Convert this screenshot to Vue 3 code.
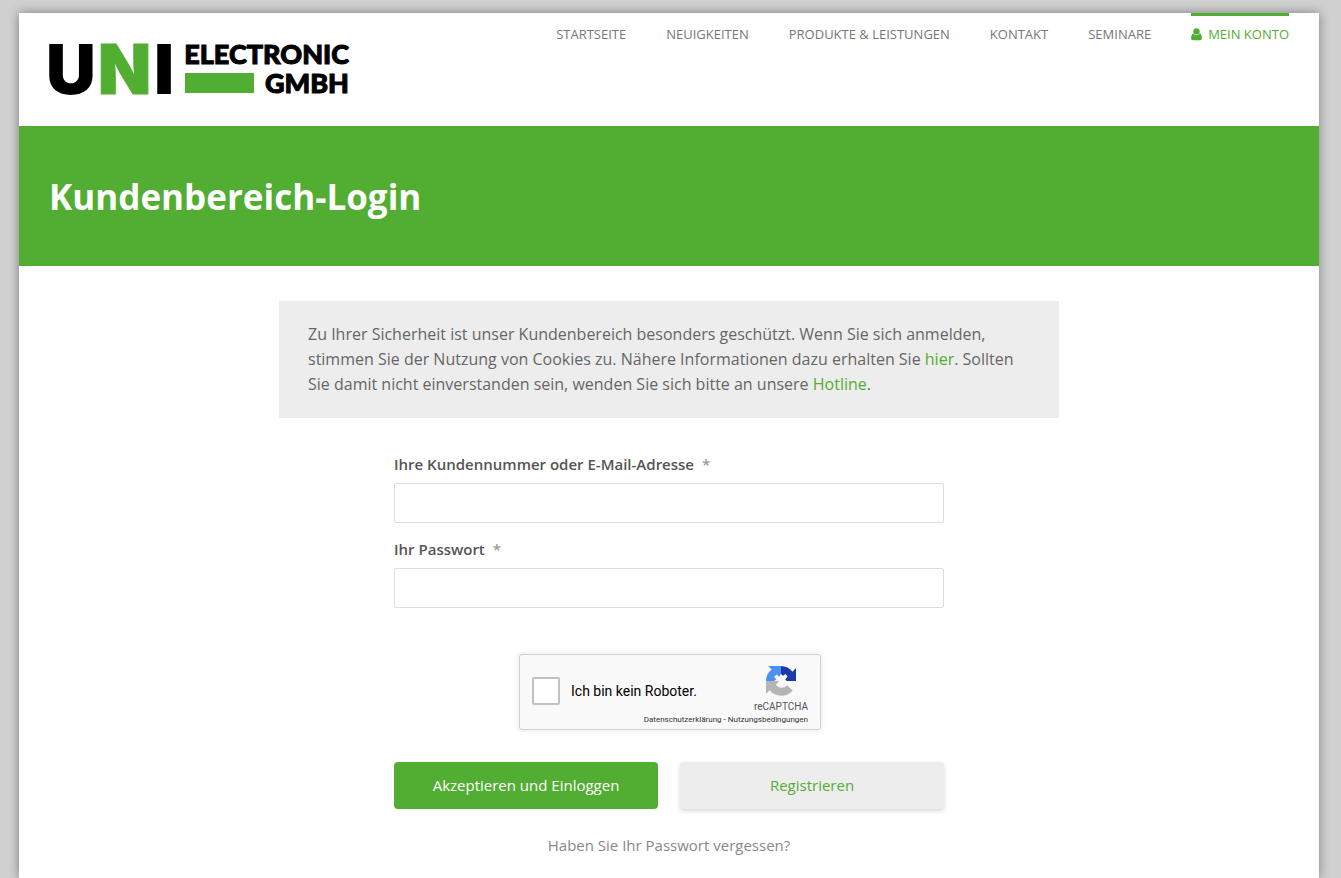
<script setup>
import { ref } from 'vue'

const links = ['Startseite', 'Neuigkeiten', 'Produkte & Leistungen', 'Kontakt', 'Seminare']
const user = ref('')
const password = ref('')
const human = ref(false)
</script>

<template>
  <div class="page">
    <header class="header">
      <a href="#" class="logo" aria-label="UNI Electronic GmbH">
        <svg width="302" height="54" viewBox="0 0 302 54">
          <g class="logo-big">
            <text x="-3" y="51">U</text>
            <text x="49" y="51" class="green outlined">N</text>
            <text x="105" y="51">I</text>
          </g>
          <g class="logo-small">
            <text x="300" y="21" text-anchor="end">ELECTRONIC</text>
            <text x="300" y="50" text-anchor="end">GMBH</text>
          </g>
          <rect x="136" y="30" width="69" height="20" class="green" />
        </svg>
      </a>
      <nav class="nav">
        <a v-for="link in links" :key="link" href="#" class="nav-link">{{ link }}</a>
        <a href="#" class="nav-link active">
          <svg width="11" height="13" viewBox="0 0 11 13" aria-hidden="true">
            <circle cx="5.5" cy="3.4" r="3.2" />
            <path d="M2.3 5.6C.7 6 .1 8 .1 10.3c0 1.300.8 2 2 2h6.800c1.200 0 2-.7 2-2C10.900 8 10.300 6 8.700 5.600 7.900 6.700 6.800 7.300 5.500 7.300S3.100 6.700 2.300 5.600z" />
          </svg>
          Mein Konto
        </a>
      </nav>
    </header>

    <section class="banner">
      <h1>Kundenbereich-Login</h1>
    </section>

    <main class="content">
      <p class="notice">
        Zu Ihrer Sicherheit ist unser Kundenbereich besonders geschützt. Wenn Sie sich anmelden,
        stimmen Sie der Nutzung von Cookies zu. Nähere Informationen dazu erhalten Sie
        <a href="#">hier</a>. Sollten Sie damit nicht einverstanden sein, wenden Sie sich bitte an
        unsere <a href="#">Hotline</a>.
      </p>

      <form class="form" @submit.prevent>
        <div class="field">
          <label for="user">Ihre Kundennummer oder E-Mail-Adresse <span class="star">*</span></label>
          <input id="user" v-model="user" type="text" autocomplete="username" />
        </div>
        <div class="field">
          <label for="password">Ihr Passwort <span class="star">*</span></label>
          <input id="password" v-model="password" type="password" autocomplete="current-password" />
        </div>

        <div class="captcha">
          <div class="captcha-check">
            <input id="human" v-model="human" type="checkbox" />
            <label for="human">Ich bin kein Roboter.</label>
          </div>
          <div class="captcha-brand">
            <svg width="30" height="30" viewBox="0 0 64 64" aria-hidden="true">
              <path fill="#1c3aa9" d="M64 32V4.500l-7.600 7.600A32 32 0 0 0 32 0v17l4 4 6-4 4 6-5 5 3 4z" />
              <path fill="#4a90f5" d="M32 0H4.500l7.600 7.600A32 32 0 0 0 0 32h17l5-4-5-5 6-5 5 5 4-6z" />
              <path fill="#b5b5b5" d="M0 32v27.500l7.600-7.600A32 32 0 0 0 57 52L45 41A15 15 0 0 1 21 40L28 32z" />
            </svg>
            <span>reCAPTCHA</span>
          </div>
          <div class="captcha-legal">
            <a href="#">Datenschutzerklärung</a> - <a href="#">Nutzungsbedingungen</a>
          </div>
        </div>

        <div class="actions">
          <button type="submit" class="btn primary">Akzeptieren und Einloggen</button>
          <button type="button" class="btn secondary">Registrieren</button>
        </div>
        <a href="#" class="forgot">Haben Sie Ihr Passwort vergessen?</a>
      </form>
    </main>
  </div>
</template>

<style>
body {
  background: #d0d0d0;
}
#app {
  display: flow-root;
}
</style>

<style scoped>
* {
  box-sizing: border-box;
}
a {
  color: #52ae32;
  text-decoration: none;
}
.page {
  margin: 13px 22px 0 19px;
  min-height: calc(100vh - 13px);
  background: #fff;
  box-shadow: 0 0 10px rgba(0, 0, 0, 0.4);
  font-family: "Open Sans", "Noto Sans", sans-serif;
  color: #666;
}
.header {
  display: flex;
  justify-content: space-between;
  align-items: flex-start;
  padding: 0 30px 29px;
}
.logo {
  margin-top: 30px;
}
.logo svg {
  display: block;
  overflow: visible;
}
.logo text {
  font-weight: 900;
}
.logo-big text {
  font-family: Inter, sans-serif;
  font-size: 69px;
}
.logo-small text {
  font-family: Lato, sans-serif;
  font-size: 27px;
  stroke: #000;
  stroke-width: 1px;
}
.logo .green {
  fill: #52ae32;
}
.logo .outlined {
  stroke: #52ae32;
  stroke-width: 1px;
}
.nav {
  display: flex;
  gap: 40px;
}
.nav-link {
  display: flex;
  align-items: center;
  gap: 6px;
  padding-top: 8px;
  border-top: 3px solid transparent;
  font-size: 13px;
  line-height: 20px;
  text-transform: uppercase;
  white-space: nowrap;
  color: #777;
}
.nav-link.active {
  border-color: #52ae32;
  color: #52ae32;
}
.nav-link svg {
  fill: currentColor;
}
.banner {
  padding: 47px 30px 45px;
  background: #52ae32;
}
.banner h1 {
  margin: 0;
  font-size: 35px;
  line-height: 48px;
  font-weight: 700;
  color: #fff;
}
.content {
  padding: 35px 30px 20px;
}
.notice {
  max-width: 780px;
  margin: 0 auto;
  padding: 21px 29px;
  background: #ededed;
  font-size: 16px;
  line-height: 25px;
}
.form {
  display: flex;
  flex-direction: column;
  max-width: 550px;
  margin: 36px auto 0;
}
.field {
  display: flex;
  flex-direction: column;
  gap: 9px;
  margin-bottom: 16px;
}
.field label {
  font-size: 15px;
  line-height: 20px;
  font-weight: 600;
  color: #555;
}
.star {
  margin-left: 4px;
  color: #999;
}
.field input {
  width: 100%;
  height: 40px;
  padding: 0 12px;
  border: 1px solid #ddd;
  border-radius: 2px;
  background: #fff;
  font: inherit;
}
.captcha {
  display: grid;
  grid-template-columns: 1fr auto;
  align-self: center;
  width: 302px;
  margin: 30px 0 32px 2px;
  padding: 11px 12px 4px;
  border: 1px solid #d3d3d3;
  border-radius: 3px;
  background: #f9f9f9;
  box-shadow: 0 0 4px 1px rgba(0, 0, 0, 0.08);
  font-family: Roboto, sans-serif;
  color: #000;
}
.captcha-check {
  display: flex;
  align-items: center;
  gap: 11px;
  padding-top: 2px;
  font-size: 14px;
}
.captcha-check input {
  appearance: none;
  width: 28px;
  height: 28px;
  margin: 0;
  border: 2px solid #c1c1c1;
  border-radius: 2px;
  background: #fff;
}
.captcha-check input:checked {
  background: #52ae32;
}
.captcha-brand {
  display: flex;
  flex-direction: column;
  align-items: center;
  gap: 4px;
  font-size: 10px;
  line-height: 14px;
  color: #555;
}
.captcha-legal {
  grid-column: 1 / -1;
  text-align: right;
  font-size: 8px;
  line-height: 11px;
}
.captcha-legal a {
  color: #333;
}
.actions {
  display: grid;
  grid-template-columns: 1fr 1fr;
  gap: 22px;
}
.btn {
  height: 47px;
  padding: 0 12px 2px;
  border: 0;
  border-radius: 4px;
  font-family: inherit;
  font-size: 15px;
  cursor: pointer;
}
.primary {
  background: #52ae32;
  color: #fff;
}
.secondary {
  background: #ededed;
  color: #52ae32;
  box-shadow: 0 2px 4px rgba(0, 0, 0, 0.16);
}
.forgot {
  align-self: center;
  margin-top: 26px;
  font-size: 15px;
  line-height: 20px;
  color: #888;
}
</style>
